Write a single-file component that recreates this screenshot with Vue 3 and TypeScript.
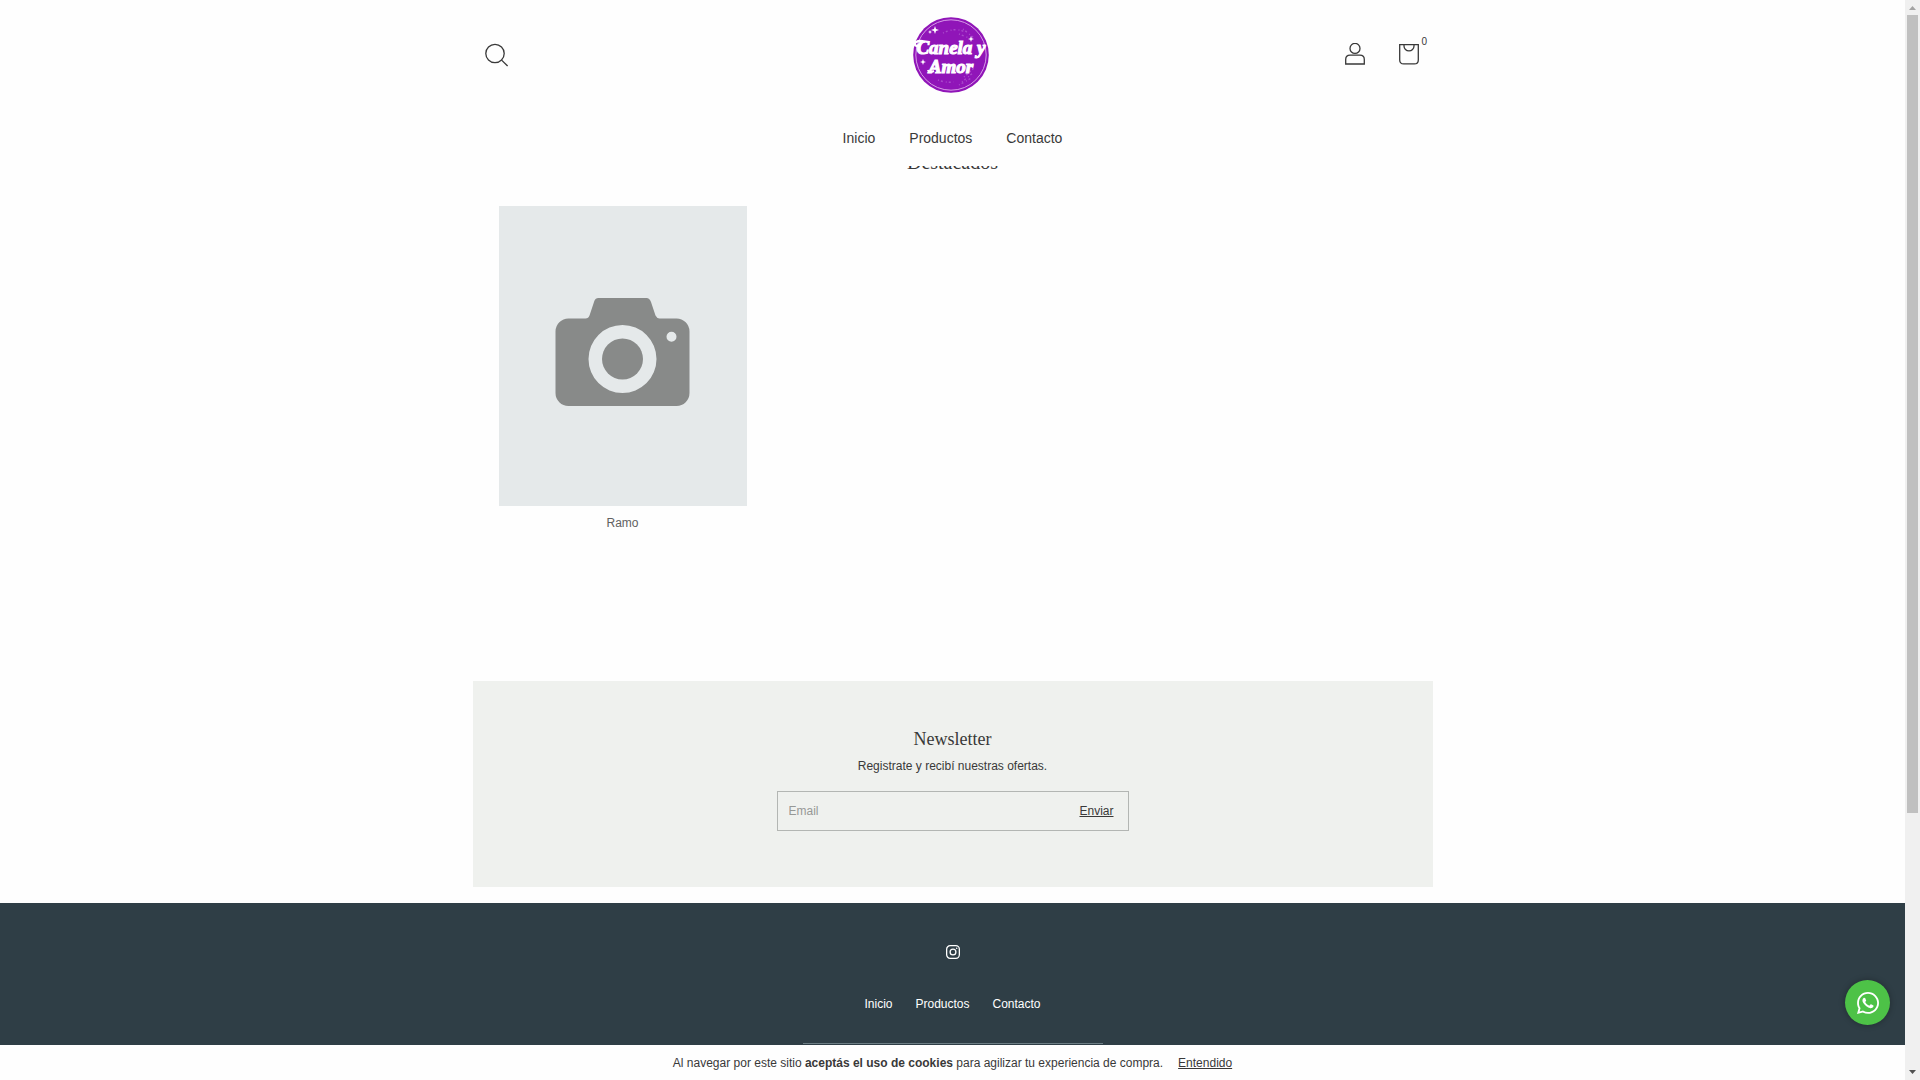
<script setup lang="ts">
import { ref } from 'vue'

interface NavLink {
  label: string
  href: string
}

const links: NavLink[] = [
  { label: 'Inicio', href: '#inicio' },
  { label: 'Productos', href: '#productos' },
  { label: 'Contacto', href: '#contacto' },
]

const cartCount = ref(0)
const email = ref('')
const showCookies = ref(true)
</script>

<template>
  <div class="window">
    <div class="page">
      <header class="header">
        <div class="container header-row">
          <div class="side">
            <button class="icon-button" type="button" aria-label="Buscar">
              <svg width="24" height="24" viewBox="0 0 24 24" class="line-icon">
                <circle cx="10" cy="10.5" r="9.2" />
                <path d="M16.6 17.1 22.6 23" />
              </svg>
            </button>
          </div>
          <a class="logo" href="#inicio" aria-label="Canela y Amor">
            <svg width="78" height="78" viewBox="0 0 78 78">
              <circle cx="38" cy="39" r="37.8" fill="#9015b8" />
              <circle cx="38" cy="39" r="35.2" fill="none" stroke="#d79be8" stroke-width="1" />
              <g fill="none" stroke="#a94acb" stroke-width="1.4" stroke-dasharray="1 2 2 3">
                <path d="M30 17q12-6 22-1M50 13l11 9M46 18l10 4M25 64q8 3 16 2M49 66l12-10M51 61l10-9M46 69l14-8" />
              </g>
              <g fill="#fff">
                <path d="m22 10 1 3 3 1-3 1-1 3-1-3-3-1 3-1zM17 14l.6 1.400 1.400.6-1.400.6L17 18l-.6-1.400L15 16l1.400-.6zM58 20l.8 2.200 2.200.8-2.200.8L58 26l-.8-2.200L55 23l2.200-.8zM10 43l.8 2.200 2.200.8-2.200.8L10 49l-.8-2.200L7 46l2.200-.8z" />
              </g>
              <g class="logo-text">
                <text x="38" y="38" text-anchor="middle">Canela y</text>
                <text x="38" y="57" text-anchor="middle">Amor</text>
              </g>
              <path d="M12 26q-5-2-9 0-3 3 1 4 3 0 3-2" fill="none" stroke="#fff" stroke-width="2.4" />
              <path d="M21 55q-5 2-6-1" fill="none" stroke="#fff" stroke-width="2.2" />
            </svg>
          </a>
          <div class="side side-end">
            <a class="icon-button" href="#cuenta" aria-label="Mi cuenta">
              <svg width="22" height="24" viewBox="0 0 22 24" class="line-icon">
                <circle cx="11" cy="5.400" r="5" />
                <path d="M1.700 21V16.600q0-4.400 4.400-4.400h9.800q4.400 0 4.400 4.400V21z" />
              </svg>
            </a>
            <a class="icon-button cart" href="#carrito" aria-label="Carrito">
              <svg width="22" height="24" viewBox="0 0 22 24" class="line-icon">
                <path d="M1.700 1.700h18.600v15.200q0 4-4 4H5.700q-4 0-4-4zM6 1.700v1.200a5 5 0 0 0 10 0V1.700" />
              </svg>
              <span class="badge">{{ cartCount }}</span>
            </a>
          </div>
        </div>
        <nav class="main-nav">
          <a v-for="link in links" :key="link.label" :href="link.href">{{ link.label }}</a>
        </nav>
      </header>

      <main class="container">
        <section class="featured">
          <h2>Destacados</h2>
          <div class="products">
            <a class="product" href="#ramo">
              <span class="photo">
                <svg width="136" height="110" viewBox="0 0 136 110">
                  <path
                    fill="#888a89"
                    fill-rule="evenodd"
                    d="M43.500 1h48q3 0 4.500 4l4.500 13.500q1.500 3 4 3h17a13 13 0 0 1 13 13v61.500a13 13 0 0 1-13 13H13.500A13 13 0 0 1 .5 96V34.500a13 13 0 0 1 13-13h17q3 0 4-3l4.500-13.500q1-4 4.500-4zM67.500 28a34 34 0 1 0 0 68 34 34 0 1 0 0-68zM116.500 34.800a5 5 0 1 0 0 10 5 5 0 1 0 0-10z"
                  />
                  <circle cx="67.500" cy="62" r="20.500" fill="#888a89" />
                </svg>
              </span>
              <span class="product-name">Ramo</span>
            </a>
          </div>
        </section>

        <section class="newsletter">
          <h3>Newsletter</h3>
          <p>Registrate y recibí nuestras ofertas.</p>
          <form class="signup" @submit.prevent>
            <input v-model="email" type="email" placeholder="Email" aria-label="Email" />
            <button type="submit">Enviar</button>
          </form>
        </section>
      </main>

      <footer class="footer">
        <a class="instagram" href="#instagram" aria-label="Instagram">
          <svg width="14" height="14" viewBox="0 0 14 14" fill="none" stroke="#fff" stroke-width="1.300">
            <rect x=".65" y=".65" width="12.700" height="12.700" rx="3.500" />
            <circle cx="7" cy="7" r="2.900" />
            <circle cx="10.700" cy="3.300" r=".8" fill="#fff" stroke="none" />
          </svg>
        </a>
        <nav class="footer-nav">
          <a v-for="link in links" :key="link.label" :href="link.href">{{ link.label }}</a>
        </nav>
        <hr />
      </footer>

      <a class="whatsapp" href="#whatsapp" aria-label="WhatsApp">
        <svg width="22" height="22" viewBox="0 0 448 448" fill="#fff">
          <path
            d="M380.900 65.100C339 23.100 283.200 0 223.900 0 101.500 0 1.900 99.600 1.900 222c0 39.100 10.200 77.300 29.600 111L0 448l117.700-30.900c32.400 17.700 68.900 27 106.100 27h.1C346.200 444.100 448 344.500 448 222.100c0-59.300-25.200-115-67.100-157zm-157 341.600c-33.200 0-65.700-8.900-94-25.700l-6.700-4-69.800 18.300L72 327.200l-4.400-7C49.100 290.800 39.400 256.900 39.400 222c0-101.700 82.800-184.500 184.600-184.500 49.300 0 95.600 19.200 130.400 54.100 34.800 34.900 56.200 81.200 56.100 130.500 0 101.800-84.900 184.600-186.600 184.600zm101.200-138.200c-5.500-2.800-32.800-16.200-37.900-18-5.100-1.900-8.800-2.800-12.500 2.800-3.700 5.600-14.300 18-17.600 21.800-3.200 3.700-6.500 4.200-12 1.400-32.600-16.300-54-29.100-75.500-66-5.700-9.800 5.700-9.100 16.300-30.300 1.800-3.700.9-6.900-.5-9.700-1.400-2.800-12.500-30.100-17.100-41.200-4.500-10.800-9.100-9.300-12.500-9.500-3.200-.2-6.900-.2-10.600-.2-3.700 0-9.700 1.400-14.800 6.900-5.100 5.600-19.400 19-19.400 46.300 0 27.300 19.900 53.700 22.600 57.400 2.800 3.700 39.100 59.700 94.800 83.800 35.200 15.200 49 16.500 66.600 13.900 10.700-1.600 32.800-13.400 37.400-26.400 4.600-13 4.600-24.100 3.200-26.400-1.300-2.500-5-3.900-10.500-6.600z"
          />
        </svg>
      </a>

      <div v-if="showCookies" class="cookies">
        <span>Al navegar por este sitio <b>aceptás el uso de cookies</b> para agilizar tu experiencia de compra.</span>
        <button type="button" @click="showCookies = false">Entendido</button>
      </div>
    </div>

    <div class="scrollbar" aria-hidden="true">
      <svg width="15" height="15" viewBox="0 0 15 15"><path d="M4 10h7L7.500 6z" fill="#a3a3a3" /></svg>
      <div class="track"><div class="thumb"></div></div>
      <svg width="15" height="15" viewBox="0 0 15 15"><path d="M4 5h7L7.500 9z" fill="#505050" /></svg>
    </div>
  </div>
</template>

<style>
body {
  overflow: hidden;
  background: #fefefe;
}
</style>

<style scoped>
* {
  box-sizing: border-box;
}

.window {
  display: flex;
  height: 100vh;
  color: #393939;
  font: 12px/18px "Liberation Sans", Arial, sans-serif;
}

.page {
  position: relative;
  flex: 1;
  min-width: 0;
  overflow: hidden;
  background: #fefefe;
}

a {
  color: inherit;
  text-decoration: none;
}

button {
  padding: 0;
  border: 0;
  background: none;
  color: inherit;
  font: inherit;
  cursor: pointer;
}

h2,
h3,
p {
  margin: 0;
}

h2,
h3 {
  font-family: "Liberation Serif", "Times New Roman", serif;
  font-weight: 400;
}

.container {
  width: 100%;
  max-width: 960px;
  margin: 0 auto;
}

.header {
  position: absolute;
  z-index: 2;
  top: 0;
  left: 0;
  right: 0;
  padding-bottom: 18px;
  background: #fefefe;
}

.header-row {
  display: flex;
  align-items: center;
  height: 110px;
  padding: 0 13px 0 12px;
}

.side {
  display: flex;
  flex: 1;
}

.side-end {
  justify-content: flex-end;
  gap: 32px;
}

.icon-button {
  position: relative;
  display: block;
  height: 24px;
}

.line-icon {
  display: block;
  fill: none;
  stroke: #393939;
  stroke-width: 1.3;
}

.logo,
.logo svg {
  display: block;
}

.logo-text {
  fill: #fff;
  stroke: #fff;
  stroke-width: 1.1;
  font: italic bold 19px "Liberation Serif", serif;
}

.badge {
  position: absolute;
  top: -10px;
  left: 24px;
  font-size: 10px;
}

.main-nav {
  display: flex;
  justify-content: center;
  gap: 34px;
  padding-top: 18px;
  font-size: 14px;
  line-height: 20px;
}

.featured {
  padding: 150px 26px 149px;
}

.featured h2 {
  margin-bottom: 32px;
  font-size: 20px;
  line-height: 24px;
  text-align: center;
}

.product {
  display: flex;
  flex-direction: column;
  gap: 8px;
  width: 248px;
  color: #616161;
  text-align: center;
}

.photo {
  display: flex;
  align-items: center;
  justify-content: center;
  height: 300px;
  padding-bottom: 8px;
  background: #e5e9ea;
}

.newsletter {
  display: flex;
  flex-direction: column;
  align-items: center;
  padding: 46px 24px 56px;
  background: #eff1ee;
}

.newsletter h3 {
  margin-bottom: 6px;
  font-size: 18px;
  line-height: 24px;
}

.signup {
  display: flex;
  width: 100%;
  max-width: 352px;
  height: 40px;
  margin-top: 16px;
  border: 1px solid #b3b6b3;
}

.signup input {
  flex: 1;
  min-width: 0;
  padding: 0 11px;
  border: 0;
  outline: 0;
  background: none;
  color: inherit;
  font: inherit;
}

.signup input::placeholder {
  color: #969896;
}

.signup button {
  padding: 0 14px;
  text-decoration: underline;
}

.footer {
  display: flex;
  flex-direction: column;
  align-items: center;
  min-height: 440px;
  margin-top: 16px;
  padding: 42px 24px;
  background: #2f3e46;
  color: #fff;
}

.instagram,
.instagram svg {
  display: block;
}

.footer-nav {
  display: flex;
  gap: 23px;
  padding: 36px 0 30px;
}

.footer hr {
  width: 100%;
  max-width: 300px;
  margin: 0;
  border: 0;
  border-top: 1px solid #6c7d84;
}

.whatsapp {
  position: absolute;
  z-index: 2;
  right: 15px;
  bottom: 55px;
  display: flex;
  align-items: center;
  justify-content: center;
  width: 45px;
  height: 45px;
  border-radius: 50%;
  background: #4dc247;
  box-shadow: 0 0 6px rgba(0, 0, 0, 0.3);
}

.cookies {
  position: absolute;
  z-index: 1;
  right: 0;
  bottom: 0;
  left: 0;
  display: flex;
  align-items: center;
  justify-content: center;
  gap: 15px;
  height: 35px;
  background: #fefefe;
}

.cookies button {
  text-decoration: underline;
}

.scrollbar {
  display: flex;
  flex-direction: column;
  width: 15px;
  background: #f0f0f0;
}

.track {
  flex: 1;
  padding: 0 2px;
}

.thumb {
  height: 76%;
  background: #c0c0c0;
}
</style>
